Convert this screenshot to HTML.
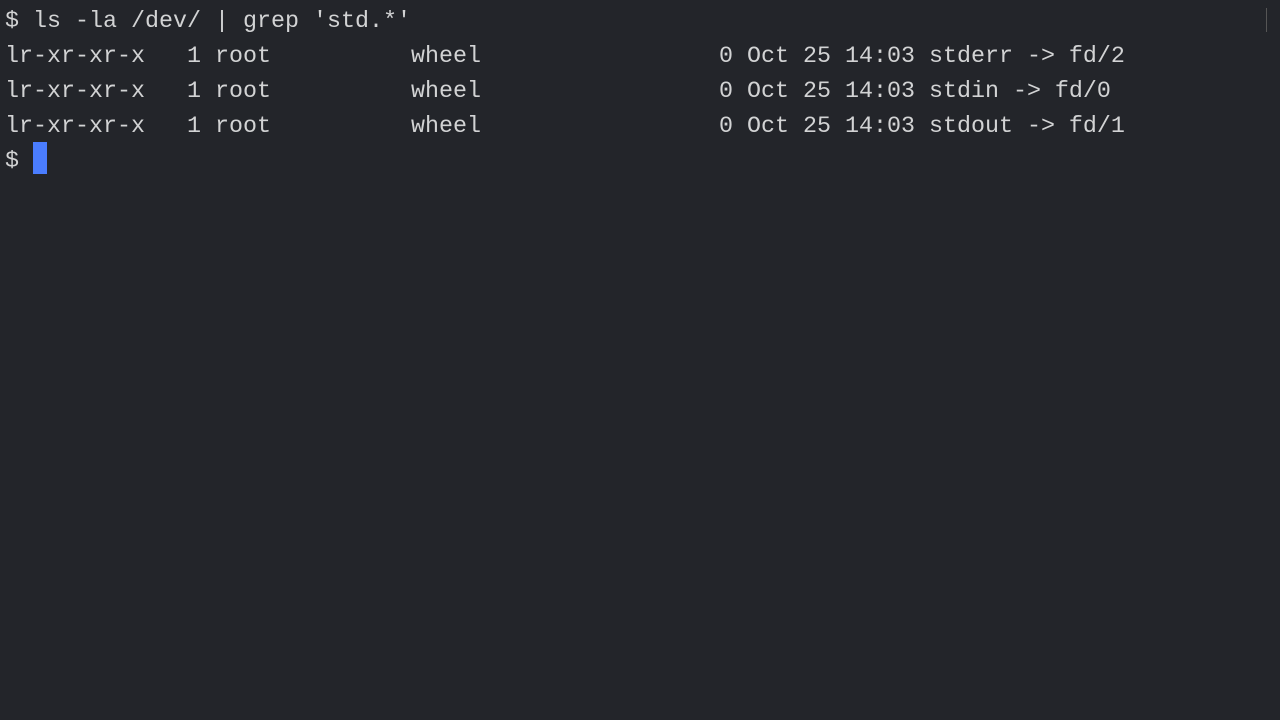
<!DOCTYPE html>
<html><head><style>
html,body{margin:0;padding:0;background:#23252a;width:1280px;height:720px;overflow:hidden}
pre{position:absolute;left:5px;top:5px;margin:0;font-family:"Liberation Mono",monospace;font-size:23.33px;line-height:35px;color:#d2d3d4;white-space:pre}
.cur{position:absolute;left:33px;top:142px;width:14px;height:32px;background:#4a7dff}
.bar{position:absolute;left:1266px;top:8px;width:1px;height:24px;background:#555}
</style></head><body>
<pre>$ ls -la /dev/ | grep 'std.*'
lr-xr-xr-x   1 root          wheel                 0 Oct 25 14:03 stderr -> fd/2
lr-xr-xr-x   1 root          wheel                 0 Oct 25 14:03 stdin -> fd/0
lr-xr-xr-x   1 root          wheel                 0 Oct 25 14:03 stdout -> fd/1
$ </pre>
<div class="cur"></div>
<div class="bar"></div>
</body></html>
